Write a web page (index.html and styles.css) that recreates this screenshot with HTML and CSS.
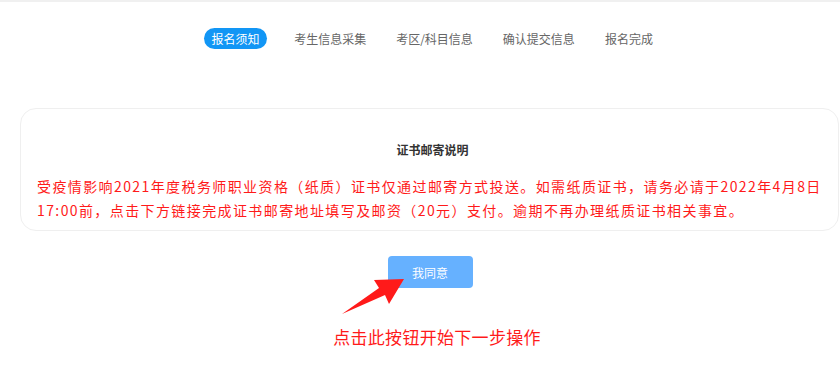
FILE: index.html
```html
<!DOCTYPE html>
<html lang="zh-CN">
<head>
<meta charset="utf-8">
<title>报名须知</title>
<link rel="stylesheet" href="styles.css">
</head>
<body>
<div class="topbar"></div>
<div class="page">
  <nav class="steps">
    <span class="step active">报名须知</span>
    <span class="step">考生信息采集</span>
    <span class="step">考区/科目信息</span>
    <span class="step">确认提交信息</span>
    <span class="step">报名完成</span>
  </nav>
  <section class="card">
    <h2 class="card-title">证书邮寄说明</h2>
    <p class="notice">受疫情影响2021年度税务师职业资格（纸质）证书仅通过邮寄方式投送。如需纸质证书，请务必请于2022年4月8日17:00前，点击下方链接完成证书邮寄地址填写及邮资（20元）支付。逾期不再办理纸质证书相关事宜。</p>
  </section>
  <div class="actions">
    <button class="agree">我同意</button>
    <svg class="arrow" width="75" height="56" viewBox="0 0 75 56">
      <polygon points="7,51 44,25 39,17 69,16 54,41 50,32" fill="#ff1a1a"/>
    </svg>
    <p class="hint">点击此按钮开始下一步操作</p>
  </div>
</div>
</body>
</html>
```

FILE: styles.css
```css
html, body {
  margin: 0;
  padding: 0;
  background: #fff;
  overflow: hidden;
}
body {
  font-family: "Noto Sans CJK SC", "Noto Sans", sans-serif;
  color: #333;
}
.topbar {
  height: 2px;
  background: #f0f0f0;
}
.page {
  margin-left: 20px;
  width: 820px;
}
.steps {
  display: flex;
  justify-content: center;
  align-items: center;
  gap: 24px;
  padding-top: 26px;
}
.step {
  font-size: 12px;
  line-height: 21px;
  color: #666;
  padding: 0 3px;
  white-space: nowrap;
}
.step.active {
  background: #1296f5;
  color: #fff;
  border-radius: 11px;
  padding: 0 7.5px;
}
.card {
  margin-top: 59px;
  width: 819px;
  box-sizing: border-box;
  border: 1px solid #efefef;
  border-radius: 16px;
  padding: 31px 10px 8px 16px;
}
.card-title {
  margin: 0;
  text-align: center;
  font-size: 12px;
  line-height: 20px;
  font-weight: bold;
  color: #333;
}
.notice {
  margin: 14px 0 0;
  font-size: 14px;
  line-height: 24px;
  letter-spacing: 1.4px;
  color: #ff1a1a;
}
.actions {
  position: relative;
  display: flex;
  flex-direction: column;
  align-items: center;
  padding-top: 25px;
}
.agree {
  width: 85px;
  height: 32px;
  border: none;
  border-radius: 4px;
  background: #66b1ff;
  color: #fff;
  font-family: inherit;
  font-size: 12px;
  padding: 0;
}
.arrow {
  position: absolute;
  left: calc(50% - 95px);
  top: 32px;
}
.hint {
  margin: 37px 0 0;
  padding-left: 14px;
  font-size: 17px;
  line-height: 24px;
  letter-spacing: 0.3px;
  color: #ff1a1a;
}
```
